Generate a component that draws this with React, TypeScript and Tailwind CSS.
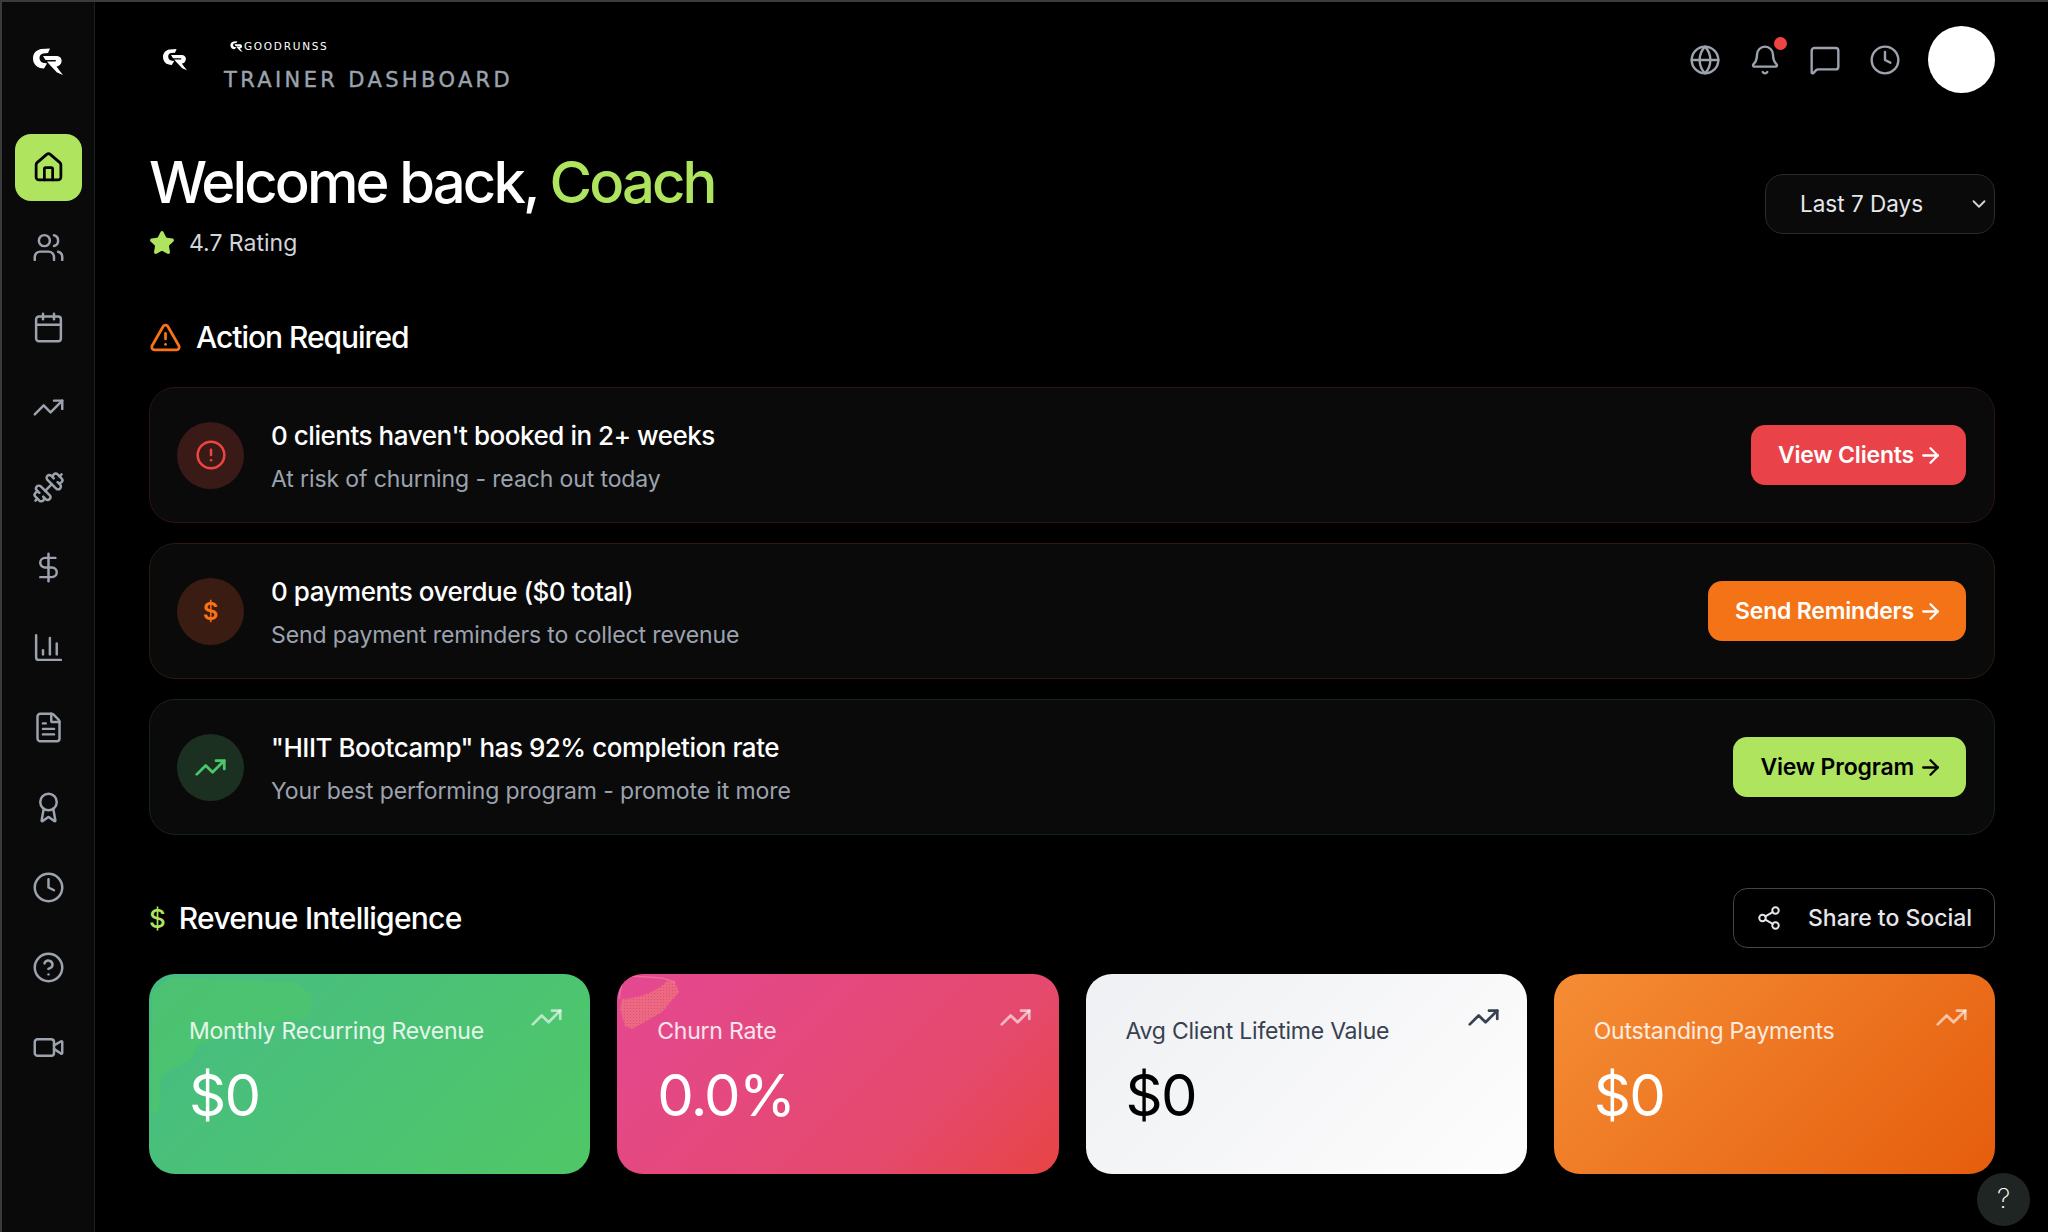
import React from "react";
import {
  House, Users, Calendar, TrendingUp, Dumbbell, DollarSign, ChartColumn, FileText, Award, Clock,
  CircleHelp, Video, Globe, Bell, MessageSquare, ChevronDown, Star, TriangleAlert, CircleAlert, ArrowRight, Share2,
} from "lucide-react";

function Logo({ className }: { className?: string }) {
  return (
    <svg viewBox="0 0 30 27" className={className} fill="#fff" aria-hidden="true">
      <path d="M8 1 L17 0.5 L15 5 L10 5.5 C7.5 6 6.5 8 6.5 10 C6.5 13 9 15 12 15 L14 15.5 L11 20.5 C4 20.5 0 16 0 10.5 C0 5 3.5 2 8 1 Z" />
      <path d="M10 8 L24 8 C27.5 8.5 29 11 28.5 14 C28 16.5 26 18 23.5 18.5 L26 22 L30 27 L24 24.5 L16 16 L14 13.5 L22 13.5 C23.5 13.5 23.5 12 22 12 L12.5 12 Z" />
    </svg>
  );
}

const navIcons = [Users, Calendar, TrendingUp, Dumbbell, DollarSign, ChartColumn, FileText, Award, Clock, CircleHelp, Video];

function Sidebar() {
  return (
    <aside className="w-[93px] shrink-0 bg-[#0a0a0a] border-r border-[#1f1f1f] flex flex-col items-center">
      <div className="h-[132px] flex items-start pt-[46px]">
        <Logo className="w-[30px] h-[27px]" />
      </div>
      <nav className="flex flex-col items-center gap-[13px]">
        <div className="w-[67px] h-[67px] rounded-[16px] bg-[#afe45f] flex items-center justify-center text-black">
          <House size={33} strokeWidth={2} />
        </div>
        {navIcons.map((Icon, i) => (
          <div key={i} className="w-[67px] h-[67px] flex items-center justify-center text-[#9ca3af]">
            <Icon size={33} strokeWidth={1.8} />
          </div>
        ))}
      </nav>
    </aside>
  );
}

function Header() {
  return (
    <header className="flex items-center justify-between h-[67px] mt-[24px]">
      <div className="flex items-center">
        <Logo className="w-[24px] h-[23px] ml-[14px] mr-[37px]" />
        <div className="flex flex-col items-start mt-[10px]">
          <div className="flex items-center ml-[6px] h-[14px]">
            <Logo className="w-[13px] h-[11px] mr-[1px]" />
            <span className="text-[10.5px] leading-none tracking-[0.165em] text-white font-['DejaVu_Sans',sans-serif]">GOODRUNSS</span>
          </div>
          <div className="mt-[17px] text-[21px] leading-[20px] tracking-[0.16em] whitespace-nowrap text-[#9ca3af] [-webkit-text-stroke:0.4px_#9ca3af] font-['DejaVu_Sans',sans-serif]">
            TRAINER DASHBOARD
          </div>
        </div>
      </div>
      <div className="flex items-center">
        <div className="flex items-center gap-[28px] mr-[27px] text-[#9ca3af]">
          <Globe size={32} strokeWidth={1.8} />
          <div className="relative">
            <Bell size={32} strokeWidth={1.8} />
            <span className="absolute -top-[7px] right-[-6px] w-[13px] h-[13px] rounded-full bg-[#ef4444]" />
          </div>
          <MessageSquare size={32} strokeWidth={1.8} />
          <Clock size={32} strokeWidth={1.8} />
        </div>
        <div className="w-[67px] h-[67px] rounded-full bg-white" />
      </div>
    </header>
  );
}

type ActionProps = {
  icon: React.ReactNode;
  circle: string;
  border: string;
  title: string;
  sub: string;
  button: string;
  btnClass: string;
};

function ActionCard({ icon, circle, border, title, sub, button, btnClass }: ActionProps) {
  return (
    <div className={`h-[136px] rounded-[26px] border bg-[#0a0a0a] flex items-center justify-between pl-[27px] pr-[28px] ${border}`}>
      <div className="flex items-center">
        <div className={`w-[67px] h-[67px] rounded-full flex items-center justify-center ${circle}`}>{icon}</div>
        <div className="ml-[27px] pt-[2px]">
          <div className="text-[26px] leading-[36px] font-medium tracking-[-0.018em] text-white">{title}</div>
          <div className="mt-[9px] text-[23px] leading-[32px] tracking-[-0.005em] text-[#9ca3af]">{sub}</div>
        </div>
      </div>
      <button className={`h-[60px] pl-[27px] pr-[23px] rounded-[14px] flex items-center gap-[4px] text-[23px] font-semibold tracking-[-0.008em] ${btnClass}`}>
        {button}
        <ArrowRight size={25} strokeWidth={2.2} />
      </button>
    </div>
  );
}

type StatProps = { label: string; value: string; bg: string; labelC: string; valueC: string; iconC: string; overlay?: React.ReactNode };

function StatCard({ label, value, bg, labelC, valueC, iconC, overlay }: StatProps) {
  return (
    <div className={`relative h-[200px] rounded-[26px] overflow-hidden pl-[40px] pt-[41px] ${bg}`}>
      {overlay}
      <TrendingUp size={33} strokeWidth={2} className={`absolute right-[27px] top-[27px] ${iconC}`} />
      <div className={`relative text-[23px] leading-[32px] tracking-[-0.01em] ${labelC}`}>{label}</div>
      <div className={`relative mt-[12px] text-[58px] leading-[72px] tracking-[-0.03em] ${valueC}`}>{value}</div>
    </div>
  );
}

function GreenPatch() {
  return (
    <svg className="absolute left-0 top-0 w-[170px] h-[140px]" viewBox="0 0 170 140" aria-hidden="true">
      <path d="M3 18 L22 3 L148 8 L165 25 L158 45 L132 48 L98 52 L48 72 L42 85 L18 98 L12 105 L10 138 L2 138 Z" fill="#4ec46c" fillOpacity="0.75" />
    </svg>
  );
}

function PinkPatch() {
  return (
    <svg className="absolute left-0 top-0 w-[70px] h-[60px]" viewBox="0 0 70 60" aria-hidden="true">
      <defs>
        <pattern id="pink-dots" width="3" height="3" patternUnits="userSpaceOnUse">
          <rect width="3" height="3" fill="#ec6a80" />
          <rect x="1" y="1" width="1" height="1" fill="#e2488a" />
        </pattern>
      </defs>
      <path d="M5 25 C15 25 38 20 50 7 L58 8 L62 18 L45 38 L15 55 L8 52 L3 35 Z" fill="url(#pink-dots)" />
      <path d="M2 25 L5 8 L15 2 L45 4 L58 8" fill="none" stroke="#f08aa0" strokeOpacity="0.6" strokeWidth="1.5" />
    </svg>
  );
}

export default function App() {
  return (
    <div className="relative w-[2048px] h-[1232px] overflow-hidden bg-black border-t-2 border-l-2 border-[#3a3c3c] flex font-['Inter',sans-serif]">
      <Sidebar />
      <main className="flex-1 min-w-0 pl-[54px] pr-[53px]">
        <Header />
        <section className="flex items-start justify-between mt-[57px]">
          <div>
            <h1 className="text-[58px] leading-[64px] font-medium tracking-[-0.05em] text-white">
              Welcome back, <span className="text-[#afe45f]">Coach</span>
            </h1>
            <div className="flex items-center mt-[13px]">
              <Star size={26} fill="#afe45f" stroke="#afe45f" strokeWidth={2} />
              <span className="ml-[14px] text-[23px] leading-[32px] text-[#d1d5db]">4.7 Rating</span>
            </div>
          </div>
          <div className="mt-[24px] w-[230px] h-[60px] rounded-[18px] border border-[#2a2a2a] bg-[#0a0a0a] flex items-center justify-between pl-[34px] pr-[4px]">
            <span className="text-[22.5px] text-[#e5e7eb]">Last 7 Days</span>
            <ChevronDown size={22} className="text-[#d1d5db]" />
          </div>
        </section>

        <section className="mt-[58px]">
          <div className="flex items-center h-[40px]">
            <TriangleAlert size={33} strokeWidth={2} className="text-[#f97316]" />
            <h2 className="ml-[14px] text-[30px] leading-[40px] font-medium tracking-[-0.035em] text-white">Action Required</h2>
          </div>
          <div className="mt-[30px] flex flex-col gap-[20px]">
            <ActionCard
              border="border-[#2c1512]"
              circle="bg-[#3a1a16]"
              icon={<CircleAlert size={32} strokeWidth={1.9} className="text-[#ef4444]" />}
              title="0 clients haven't booked in 2+ weeks"
              sub="At risk of churning - reach out today"
              button="View Clients"
              btnClass="bg-[#e94248] text-white"
            />
            <ActionCard
              border="border-[#2c1a10]"
              circle="bg-[#3a1c12]"
              icon={<span className="mt-[2px] text-[24px] font-semibold text-[#f97316]">$</span>}
              title="0 payments overdue ($0 total)"
              sub="Send payment reminders to collect revenue"
              button="Send Reminders"
              btnClass="bg-[#f47316] text-white"
            />
            <ActionCard
              border="border-[#14251a]"
              circle="bg-[#1b3020]"
              icon={<TrendingUp size={33} strokeWidth={2} className="text-[#4ac76a]" />}
              title={'"HIIT Bootcamp" has 92% completion rate'}
              sub="Your best performing program - promote it more"
              button="View Program"
              btnClass="bg-[#afe45f] text-black"
            />
          </div>
        </section>

        <section className="mt-[53px]">
          <div className="flex items-center justify-between h-[60px]">
            <div className="flex items-center">
              <span className="text-[26px] font-medium text-[#afe45f]">$</span>
              <h2 className="ml-[13px] text-[30px] leading-[40px] font-medium tracking-[-0.025em] text-white">Revenue Intelligence</h2>
            </div>
            <button className="w-[262px] h-[60px] rounded-[14px] border border-[#444] flex items-center pl-[22px] text-[#e5e7eb]">
              <Share2 size={26} strokeWidth={1.8} />
              <span className="ml-[26px] text-[23px] font-medium">Share to Social</span>
            </button>
          </div>
          <div className="mt-[26px] grid grid-cols-4 gap-[27px]">
            <StatCard label="Monthly Recurring Revenue" value="$0" overlay={<GreenPatch />} bg="bg-[linear-gradient(135deg,#46bc84_0%,#4dc46f_70%,#50c766_100%)]" labelC="text-white/85" valueC="text-white" iconC="text-white/60" />
            <StatCard label="Churn Rate" value="0.0%" overlay={<PinkPatch />} bg="bg-[linear-gradient(135deg,#e44892_0%,#e5496c_70%,#e84444_100%)]" labelC="text-white/85" valueC="text-white" iconC="text-white/60" />
            <StatCard label="Avg Client Lifetime Value" value="$0" bg="bg-[linear-gradient(135deg,#eff0f3_0%,#fdfdfd_100%)]" labelC="text-[#374151]" valueC="text-black" iconC="text-[#374151]" />
            <StatCard label="Outstanding Payments" value="$0" bg="bg-[linear-gradient(135deg,#f58d35_0%,#e55d0d_100%)]" labelC="text-white/85" valueC="text-white" iconC="text-white/60" />
          </div>
        </section>
      </main>
      <div className="absolute left-[1975px] top-[1171px] w-[53px] h-[53px] rounded-full bg-[#1f2523] flex items-center justify-center text-[27px] font-extralight text-white">?</div>
    </div>
  );
}
